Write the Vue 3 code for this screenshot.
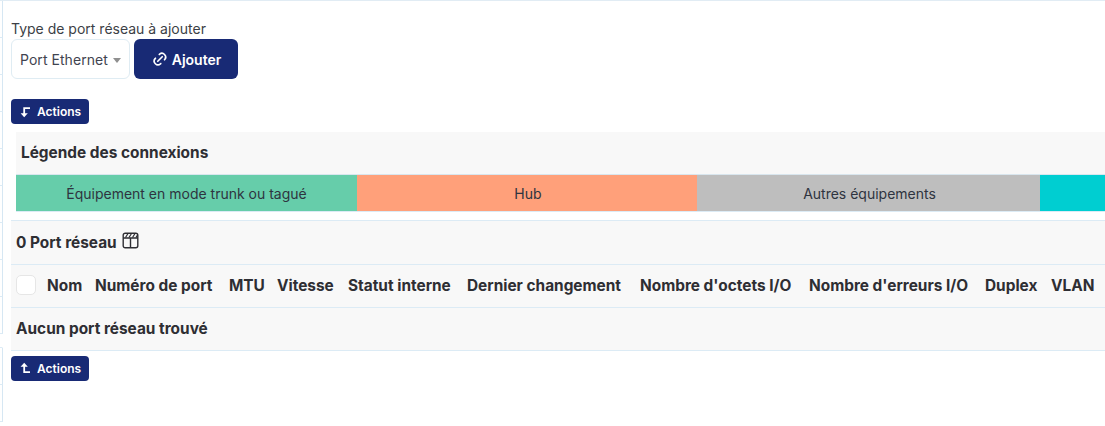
<template>
  <div class="page">
    <div class="rail">
      <span v-for="n in 12" :key="n" class="tick"></span>
    </div>

    <form class="add-form" @submit.prevent>
      <label class="add-label">Type de port réseau à ajouter</label>
      <div class="add-row">
        <div class="select">
          <span>Port Ethernet</span>
          <span class="caret"></span>
        </div>
        <button class="btn-primary" type="button">
          <svg width="18" height="18" viewBox="0 0 24 24" fill="none" stroke="currentColor" stroke-width="2.2" stroke-linecap="round" stroke-linejoin="round">
            <path d="M9 15l6-6" />
            <path d="M11 6l.5-.5a5 5 0 0 1 7 7l-.5.5" />
            <path d="M13 18l-.4.5a5 5 0 0 1-7.1-7l.5-.5" />
          </svg>
          Ajouter
        </button>
      </div>
    </form>

    <button class="btn-actions top" type="button">
      <svg width="12" height="12" viewBox="0 0 12 12" fill="none" stroke="currentColor" stroke-width="1.8">
        <path d="M11 2.2H5.2V9" />
        <path d="M1.6 7.2H8.8L5.2 11.2Z" fill="currentColor" stroke="none" />
      </svg>
      Actions
    </button>

    <section class="legend">
      <h3 class="legend-title">Légende des connexions</h3>
      <div class="legend-strip">
        <div
          v-for="item in legend"
          :key="item.label"
          class="legend-cell"
          :style="{ background: item.color, flexBasis: item.width + 'px' }"
        >
          {{ item.label }}
        </div>
      </div>
    </section>

    <section class="ports">
      <div class="ports-title">
        <span>0 Port réseau</span>
        <svg class="ports-icon" width="17" height="17" viewBox="0 0 17 17" fill="none" stroke="#2e2e33" stroke-width="1.4">
          <rect x="1.2" y="1.2" width="14.6" height="14.6" rx="2" />
          <path d="M1.2 6H15.8M8.5 6V15.8" />
          <path d="M3.5 5.5L6 1.5M7 5.5L9.5 1.5M10.5 5.5L13 1.5M14 5.5L15.5 3" stroke-width="1.2" />
        </svg>
      </div>
      <table class="ports-table">
        <colgroup>
          <col v-for="col in columns" :key="col.label" :style="{ width: col.width + 'px' }" />
        </colgroup>
        <thead>
          <tr>
            <th v-for="col in columns" :key="col.label">
              <span v-if="col.check" class="check"></span>
              <template v-else>{{ col.label }}</template>
            </th>
          </tr>
        </thead>
      </table>
      <div class="ports-empty">Aucun port réseau trouvé</div>
    </section>

    <button class="btn-actions bottom" type="button">
      <svg width="12" height="12" viewBox="0 0 12 12" fill="none" stroke="currentColor" stroke-width="1.8">
        <path d="M11 10.2H5.2V3" />
        <path d="M1.6 4.8H8.8L5.2 0.8Z" fill="currentColor" stroke="none" />
      </svg>
      Actions
    </button>
  </div>
</template>

<script setup>
const legend = [
  { label: 'Équipement en mode trunk ou tagué', color: '#66cdaa', width: 341 },
  { label: 'Hub', color: '#ffa07a', width: 340 },
  { label: 'Autres équipements', color: '#bebebe', width: 343 },
  { label: '', color: '#00ced1', width: 341 }
];

// widths taken from where each header starts
const columns = [
  { label: 'check', width: 31, check: true },
  { label: 'Nom', width: 48 },
  { label: 'Numéro de port', width: 134 },
  { label: 'MTU', width: 48 },
  { label: 'Vitesse', width: 71 },
  { label: 'Statut interne', width: 119 },
  { label: 'Dernier changement', width: 173 },
  { label: "Nombre d'octets I/O", width: 169 },
  { label: "Nombre d'erreurs I/O", width: 176 },
  { label: 'Duplex', width: 66 },
  { label: 'VLAN', width: 59 }
];
</script>

<style>
html,
body {
  margin: 0;
  background: #fff;
  overflow: hidden;
}
</style>

<style scoped>
.page {
  position: relative;
  box-sizing: border-box;
  width: 1105px;
  height: 426px;
  overflow: hidden;
  padding: 19px 0 0 11px;
  border-top: 1px solid #e1ecf4;
  font-family: Inter, "Liberation Sans", sans-serif;
  color: #2e2e33;
  background: #fff;
}

.rail {
  position: absolute;
  left: 0;
  top: 0;
  width: 3px;
  height: 426px;
}

.tick {
  display: block;
  box-sizing: border-box;
  height: 37px;
  border-bottom: 1px solid #dcebf5;
  border-right: 1px solid #d6e7f3;
}

.tick:nth-child(10) {
  border-right-color: transparent;
  height: 14px;
}

.add-label {
  display: block;
  margin-bottom: 2px;
  font-size: 14px;
  line-height: 17px;
  color: #3c3f46;
}

.add-row {
  display: flex;
  gap: 4px;
}

.select {
  box-sizing: border-box;
  width: 119px;
  height: 40px;
  padding: 0 8px;
  display: flex;
  align-items: center;
  justify-content: space-between;
  border: 1px solid #dfecf3;
  border-radius: 6px;
  font-size: 14px;
  letter-spacing: 0.05px;
  color: #3f4450;
}

.caret {
  width: 0;
  height: 0;
  margin-top: 2px;
  border-left: 4px solid transparent;
  border-right: 4px solid transparent;
  border-top: 5px solid #8f8f8f;
}

.btn-primary {
  box-sizing: border-box;
  width: 104px;
  height: 40px;
  display: flex;
  align-items: center;
  justify-content: center;
  gap: 3px;
  border: none;
  border-radius: 6px;
  background: #182a75;
  color: #fff;
  font-family: inherit;
  font-size: 14px;
  font-weight: 600;
}

.btn-actions {
  box-sizing: border-box;
  width: 78px;
  height: 25px;
  display: flex;
  align-items: center;
  gap: 6px;
  padding: 0 0 0 8px;
  border: none;
  border-radius: 4px;
  background: #182a75;
  color: #fff;
  font-family: inherit;
  font-size: 12px;
  font-weight: 600;
}

.btn-actions.top {
  margin-top: 20px;
}

.btn-actions.bottom {
  margin-top: 5px;
}

.legend {
  margin: 8px 0 0 5px;
  background: #f8f8f8;
  overflow: hidden;
}

.legend-title {
  margin: 0;
  height: 42px;
  padding-left: 5px;
  line-height: 42px;
  font-size: 15.4px;
  font-weight: 700;
  color: #2e2e33;
}

.legend-strip {
  display: flex;
  box-sizing: border-box;
  height: 38px;
  border-top: 1px solid #d9e6ee;
  border-bottom: 1px solid #dcebf5;
}

.legend-cell {
  flex: 0 0 auto;
  box-sizing: border-box;
  display: flex;
  align-items: center;
  justify-content: center;
  font-size: 14px;
  color: #2e3440;
}

.legend-cell + .legend-cell {
  padding-left: 2px;
}

.ports {
  margin-top: 8px;
  background: #f8f8f8;
  border-top: 1px solid #dcebf5;
}

.ports-title {
  box-sizing: border-box;
  height: 44px;
  display: flex;
  align-items: center;
  gap: 5px;
  padding-left: 5px;
  font-size: 15.4px;
  font-weight: 700;
  border-bottom: 1px solid #dcebf5;
}

.ports-icon {
  margin-bottom: 4px;
}

.ports-table {
  width: 1094px;
  table-layout: fixed;
  border-collapse: collapse;
}

.ports-table th {
  box-sizing: border-box;
  height: 42px;
  padding: 0 0 1px 5px;
  text-align: left;
  white-space: nowrap;
  font-size: 15.4px;
  font-weight: 650;
  border-bottom: 1px solid #dcebf5;
}

.check {
  display: block;
  box-sizing: border-box;
  width: 20px;
  height: 20px;
  background: #fff;
  border: 1px solid #e6e6e6;
  border-radius: 5px;
}

.ports-empty {
  box-sizing: border-box;
  height: 43px;
  padding-left: 5px;
  line-height: 41px;
  font-size: 15.4px;
  font-weight: 700;
  border-bottom: 1px solid #dcebf5;
}
</style>
